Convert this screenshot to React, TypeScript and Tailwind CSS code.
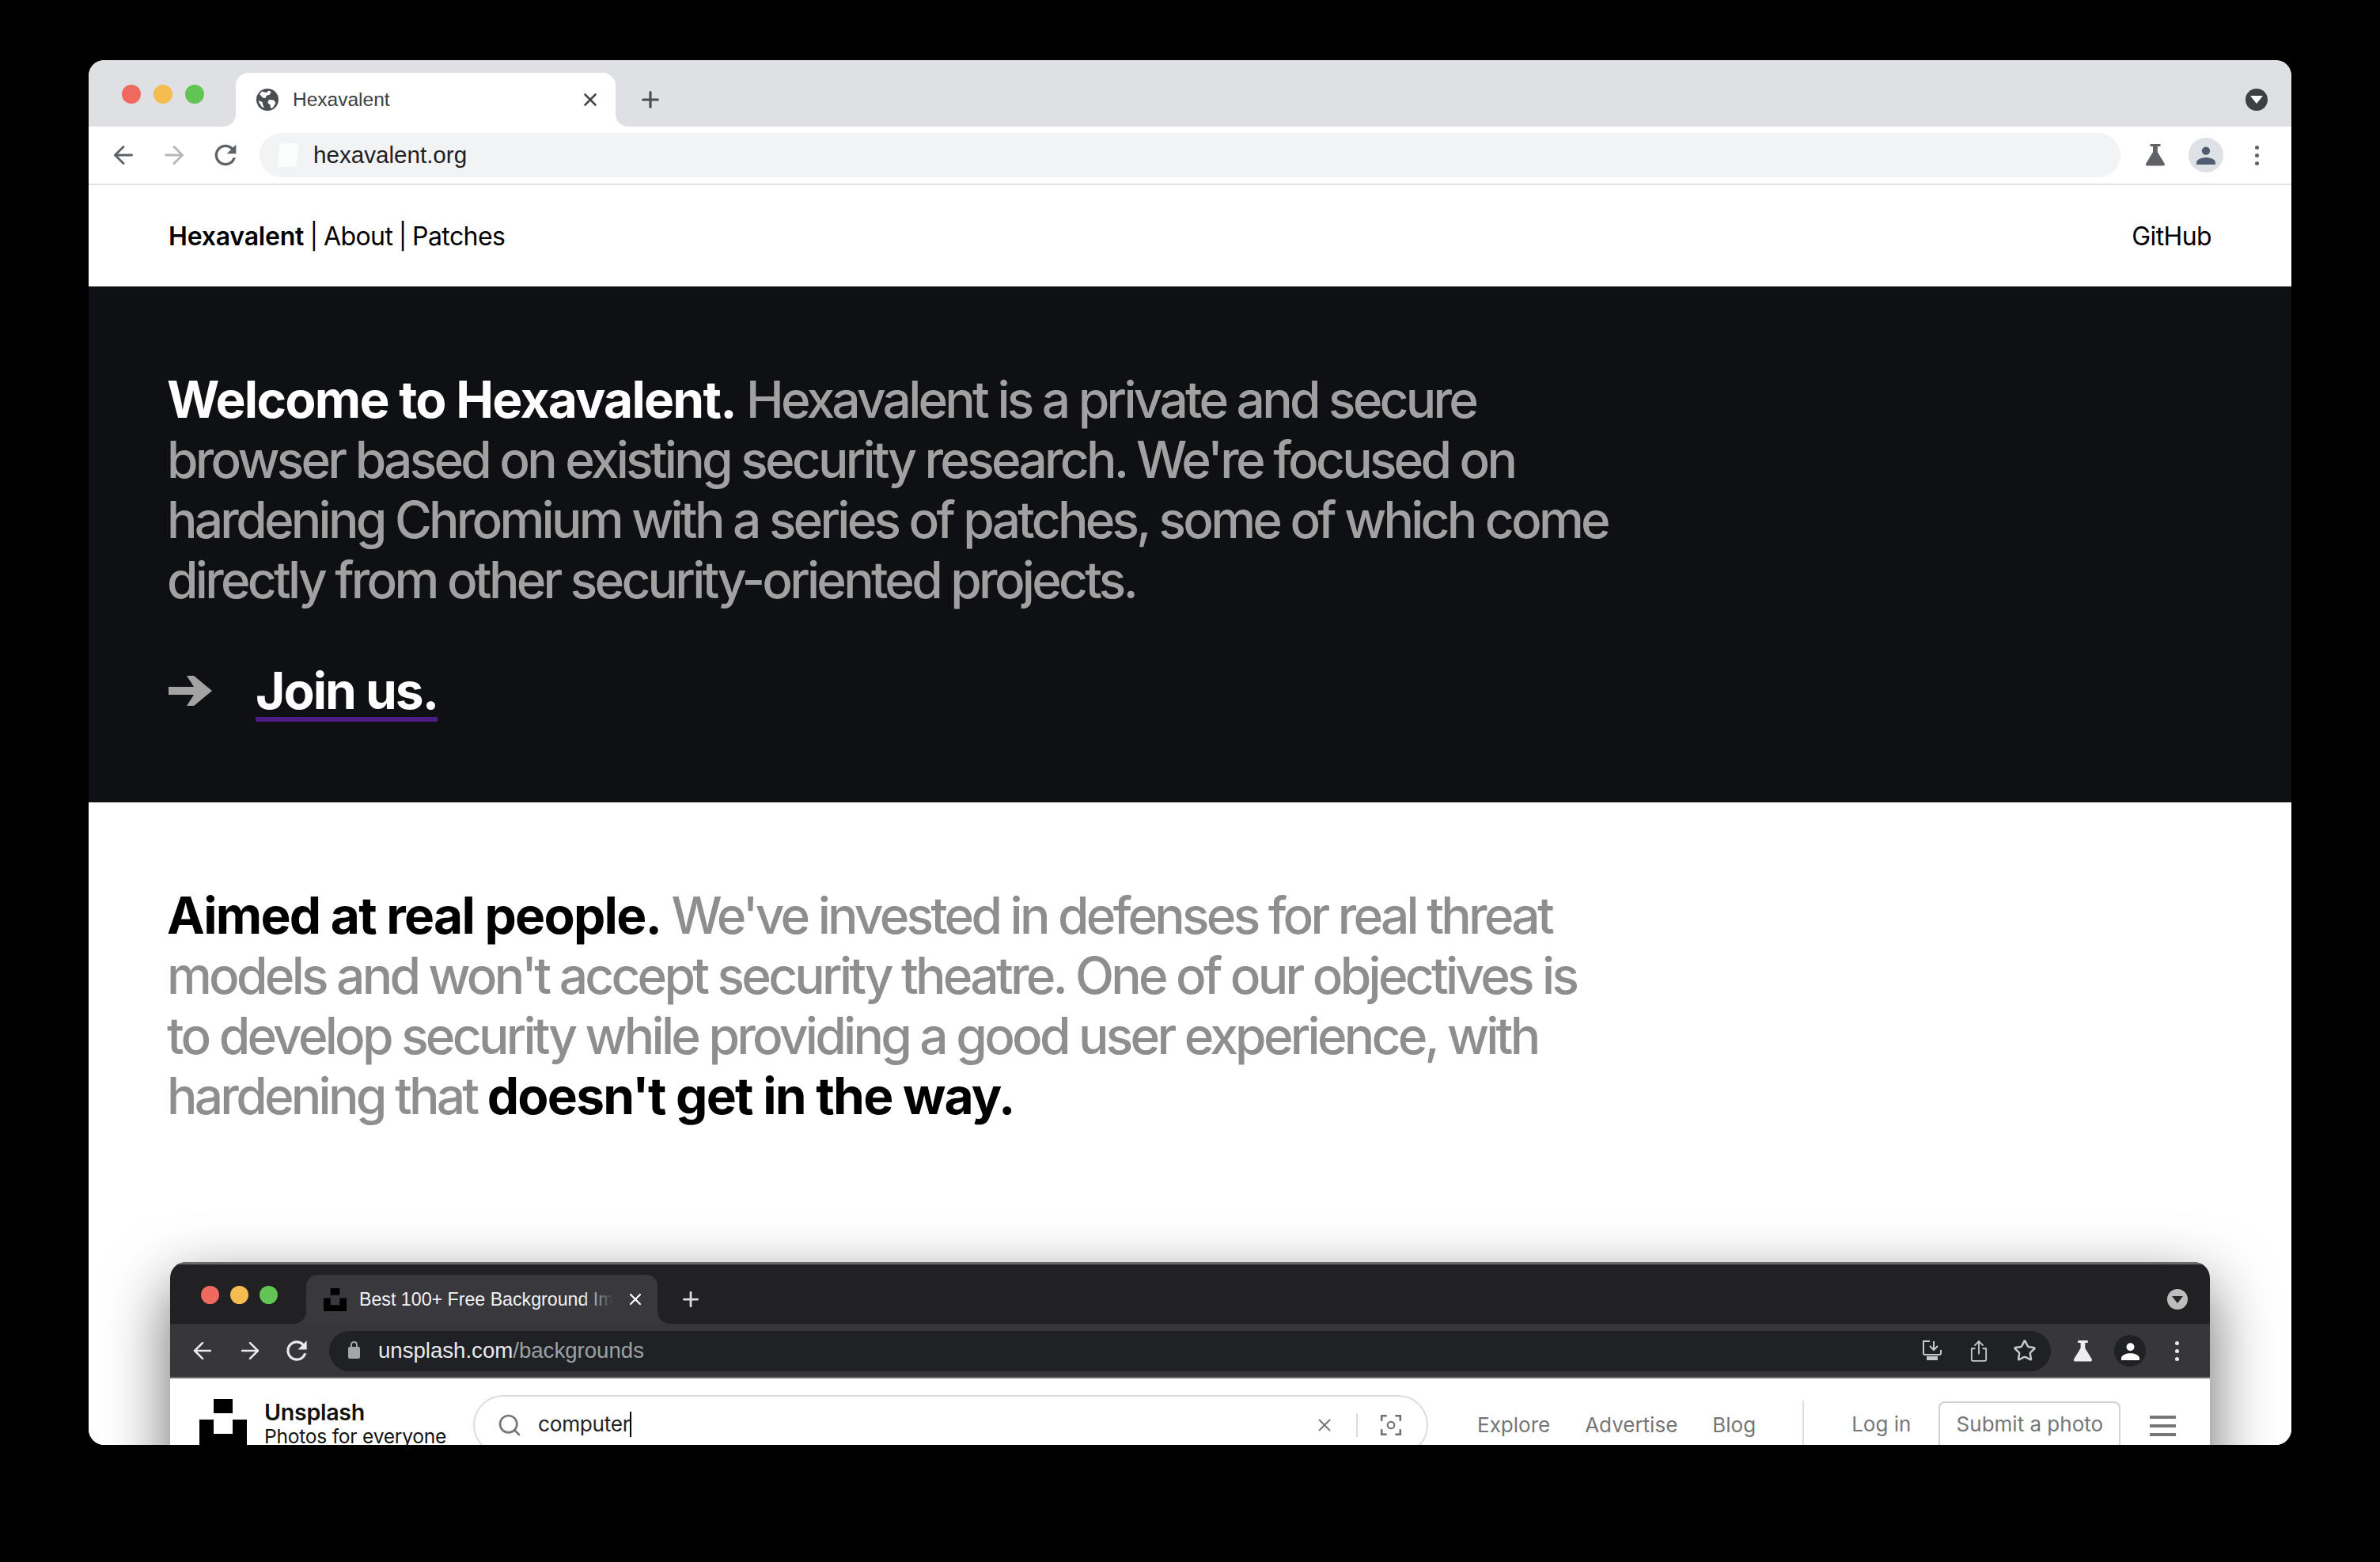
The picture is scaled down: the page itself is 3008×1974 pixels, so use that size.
import { ArrowLeft, ArrowRight, Plus, Search, Star, X } from "lucide-react";

const INTER = "font-['Inter',sans-serif]";
const HELV = "font-['Liberation_Sans',Arial,sans-serif]";

const Flask = ({ className }: { className: string }) => (
  <svg viewBox="0 0 28 28" className={className} fill="currentColor">
    <path d="M7.5 0h13v3h-3.6v7.2l8.7 14.2c.8 1.4.2 3.1-1.6 3.1H3.9c-1.8 0-2.4-1.7-1.6-3.1l8.7-14.2V3H7.5z" />
  </svg>
);

const Avatar = ({ className }: { className: string }) => (
  <svg viewBox="0 0 24 24" className={className} fill="currentColor">
    <circle cx="12" cy="6.6" r="5.2" />
    <path d="M0 21.5c0-4.6 7.4-6.6 12-6.6s12 2 12 6.6V24H0z" />
  </svg>
);

const Reload = ({ className }: { className: string }) => (
  <svg viewBox="0 0 24 24" className={className} fill="currentColor">
    <path d="M17.65 6.35A7.96 7.96 0 0 0 12 4c-4.42 0-7.99 3.58-7.99 8s3.57 8 7.99 8c3.73 0 6.84-2.55 7.73-6h-2.08A5.99 5.99 0 0 1 12 18c-3.31 0-6-2.69-6-6s2.69-6 6-6c1.66 0 3.14.69 4.22 1.78L13 11h7V4l-2.35 2.35z" />
  </svg>
);

const Dots = ({ className }: { className: string }) => (
  <div className={`flex flex-col items-center gap-[5px] ${className}`}>
    <span className="size-[5px] rounded-full bg-current" />
    <span className="size-[5px] rounded-full bg-current" />
    <span className="size-[5px] rounded-full bg-current" />
  </div>
);

const Globe = () => (
  <svg viewBox="0 0 28 28" className="size-[28px]">
    <circle cx="14" cy="14" r="14" fill="#4a4d52" />
    <path
      d="M7 3.5l5.5 1.6 3.2-2.6 3 1.6-2 3.6-4 1-1 3.4-3.6-.6-4-4.4zM16 14l6 .6 2.4 3.4-3 5.4-3.4 1.6-.6-4.6-3.2-2.6zM3 15l4.5 2 .8 3.6 1.6 4-3-1.6-3.4-5z"
      fill="#fff"
    />
  </svg>
);

const TabCorners = ({ fill }: { fill: string }) => (
  <>
    <svg viewBox="0 0 16 16" className="absolute bottom-0 -left-[16px] size-[16px]" fill={fill}>
      <path d="M16 0v16H0C9 16 16 9 16 0z" />
    </svg>
    <svg viewBox="0 0 16 16" className="absolute -right-[16px] bottom-0 size-[16px]" fill={fill}>
      <path d="M0 0v16h16C7 16 0 9 0 0z" />
    </svg>
  </>
);

const Lights = ({ size }: { size: string }) => (
  <>
    <span className={`${size} rounded-full bg-[#ee6a5f]`} />
    <span className={`${size} rounded-full bg-[#f5bd4f]`} />
    <span className={`${size} rounded-full bg-[#61c454]`} />
  </>
);

const UnsplashMark = ({ className }: { className: string }) => (
  <svg viewBox="0 0 60 60" className={className} fill="currentColor">
    <path d="M18 0h24v18H18zM0 26h18v18h24V26h18v34H0z" />
  </svg>
);

const OuterChrome = () => (
  <>
    <div className="flex h-[84px] bg-[#dfe0e4]">
      <div className="mt-[31px] ml-[42px] flex h-[24px] gap-[16px]">
        <Lights size="size-[24px]" />
      </div>
      <div className="relative mt-[16px] ml-[40px] flex h-[68px] w-[480px] items-center rounded-t-[16px] bg-white pr-[19px] pl-[26px]">
        <TabCorners fill="#ffffff" />
        <Globe />
        <span className={`${HELV} ml-[18px] text-[24.5px] text-[#3c4043]`}>Hexavalent</span>
        <X className="ml-auto size-[26px] text-[#45484c]" strokeWidth={2.4} />
      </div>
      <Plus className="mt-[34px] ml-[28px] size-[32px] text-[#4a4d52]" strokeWidth={2.4} />
      <div className="mt-[36px] mr-[30px] ml-auto flex size-[28px] items-center justify-center rounded-full bg-[#3c3f44]">
        <span className="border-x-[8px] border-t-[10px] border-x-transparent border-t-white" />
      </div>
    </div>
    <div className="flex h-[74px] items-center border-b-2 border-[#dfe1e5] bg-white">
      <ArrowLeft className="ml-[26px] size-[36px] text-[#5f6368]" strokeWidth={1.9} />
      <ArrowRight className="ml-[28px] size-[36px] text-[#b4b7bb]" strokeWidth={1.9} />
      <Reload className="ml-[27px] size-[40px] text-[#5f6368]" />
      <div className="ml-[23px] flex h-[56px] w-[2352px] items-center rounded-full bg-[#f1f3f4]">
        <span className="ml-[24px] h-[30px] w-[24px] -skew-x-6 rounded-[3px] bg-white/70" />
        <span className={`${HELV} ml-[20px] text-[29.6px] text-[#202124]`}>hexavalent.org</span>
      </div>
      <Flask className="ml-[30px] size-[28px] text-[#5f6368]" />
      <div className="ml-[28px] flex size-[44px] items-center justify-center rounded-full bg-[#dee1e6]">
        <Avatar className="size-[24px] text-[#515e72]" />
      </div>
      <Dots className="ml-[40px] text-[#5f6368]" />
    </div>
  </>
);

const InnerChrome = () => (
  <>
    <div className="flex h-[78px] border-t-[3px] border-[#6a6a6c] bg-[#212124]">
      <div className="mt-[27px] ml-[39px] flex h-[23px] gap-[14px]">
        <Lights size="size-[23px]" />
      </div>
      <div className="relative mt-[13px] ml-[36px] flex h-[62px] w-[444px] items-center rounded-t-[14px] bg-[#39393d] pl-[22px]">
        <TabCorners fill="#39393d" />
        <UnsplashMark className="size-[29px] text-black" />
        <span className={`${HELV} relative ml-[16px] w-[321px] overflow-hidden text-[23.2px] whitespace-nowrap text-[#f1f3f4]`}>
          Best 100+ Free Background Im
          <span className="absolute inset-y-0 right-0 w-[40px] bg-gradient-to-r from-transparent to-[#39393d]" />
        </span>
        <X className="ml-[16px] size-[24px] text-white" strokeWidth={2.2} />
      </div>
      <Plus className="mt-[29px] ml-[27px] size-[30px] text-[#dadce0]" strokeWidth={2.2} />
      <div className="mt-[31px] mr-[28px] ml-auto flex size-[26px] items-center justify-center rounded-full bg-[#bdbdbd]">
        <span className="border-x-[7px] border-t-[9px] border-x-transparent border-t-[#26262a]" />
      </div>
    </div>
    <div className="flex h-[69px] items-center border-b-2 border-[#6a6a6c] bg-[#37373b] pt-[1px]">
      <ArrowLeft className="ml-[24px] size-[34px] text-[#e8eaed]" strokeWidth={1.8} />
      <ArrowRight className="ml-[26px] size-[34px] text-[#e8eaed]" strokeWidth={1.8} />
      <Reload className="ml-[23px] size-[38px] text-[#e8eaed]" />
      <div className="ml-[22px] flex h-[51px] w-[2176px] items-center rounded-full bg-[#202124]">
        <span className="relative mt-[4px] ml-[24px] h-[15px] w-[15px] rounded-[2px] bg-[#a5a6a9]">
          <span className="absolute -top-[7px] left-[3px] h-[9px] w-[9px] rounded-t-full border-2 border-b-0 border-[#a5a6a9]" />
        </span>
        <span className={`${HELV} ml-[23px] text-[27.6px] text-[#e8eaed]`}>
          unsplash.com<span className="text-[#9aa0a6]">/backgrounds</span>
        </span>
        <svg viewBox="0 0 28 28" className="ml-auto size-[28px] text-[#c8c9cb]" fill="none" stroke="currentColor" strokeWidth="2">
          <path d="M11 2H3v15c0 1 .5 2 2 2h18c1 0 2-1 2-2v-4" />
          <path d="M16 2v10M11 8l5 5 5-5" />
          <path d="M8 22h12v3H8z" fill="currentColor" />
        </svg>
        <svg viewBox="0 0 24 30" className="ml-[34px] h-[28px] w-[22px] text-[#c8c9cb]" fill="none" stroke="currentColor" strokeWidth="2">
          <path d="M12 20V2M6 8l6-6 6 6" />
          <path d="M7 12H2v15c0 1 .5 2 2 2h16c1 0 2-1 2-2V12h-5" />
        </svg>
        <Star className="ml-[32px] size-[30px] text-[#c8c9cb]" strokeWidth={2} />
        <span className="w-[18px]" />
      </div>
      <Flask className="ml-[27px] size-[27px] text-[#eeeef2]" />
      <div className="ml-[26px] flex size-[40px] items-center justify-center rounded-full bg-[#202124]">
        <Avatar className="size-[23px] text-white" />
      </div>
      <Dots className="ml-[37px] text-[#e8eaed]" />
    </div>
  </>
);

const UnsplashPage = () => (
  <div className={`${INTER} flex bg-white pt-[21px] pl-[37px]`}>
    <UnsplashMark className="mt-[5px] size-[60px] shrink-0 text-black" />
    <div className="mt-[5px] ml-[22px] w-[264px] shrink-0">
      <div className="text-[28.6px] leading-[33px] font-semibold tracking-[-0.01em] text-[#111]">Unsplash</div>
      <div className="text-[24.6px] leading-[28px] tracking-[-0.01em] text-[#111]">Photos for everyone</div>
    </div>
    <div className="flex h-[76px] w-[1207px] shrink-0 items-center rounded-full border-2 border-[#dcdcdc] pr-[30px] pl-[28px]">
      <Search className="size-[32px] text-[#767676]" strokeWidth={2} />
      <span className="mb-[2px] ml-[20px] border-r-2 border-black text-[26.2px] leading-[32px] tracking-[-0.01em] text-[#222]">computer</span>
      <X className="ml-auto size-[26px] text-[#767676]" strokeWidth={1.8} />
      <span className="mx-[27px] h-[30px] w-[2px] bg-[#dcdcdc]" />
      <svg viewBox="0 0 28 28" className="size-[30px] text-[#6f6f6f]" fill="none" stroke="currentColor" strokeWidth="2.4">
        <path d="M9 3H3v6M19 3h6v6M9 25H3v-6M19 25h6v-6" />
        <circle cx="14" cy="14" r="4" strokeWidth="2" />
      </svg>
    </div>
    <div className="mt-[17px] ml-[62px] flex h-[40px] items-center gap-[44px] text-[26px] text-[#767676]">
      <span>Explore</span>
      <span>Advertise</span>
      <span>Blog</span>
    </div>
    <span className="mt-[7px] ml-[59px] h-[70px] w-[2px] bg-[#dcdcdc]" />
    <span className="mt-[17px] ml-[60px] text-[26px] leading-[40px] text-[#767676]">Log in</span>
    <div className="mt-[8px] ml-[35px] flex h-[70px] w-[230px] justify-center rounded-[8px] border-2 border-[#d1d1d1] pt-[7px] text-[26px] leading-[40px] text-[#767676]">
      Submit a photo
    </div>
    <div className="mt-[26px] ml-[37px] flex w-[33px] flex-col gap-[7px]">
      <span className="h-[4px] bg-[#767676]" />
      <span className="h-[4px] bg-[#767676]" />
      <span className="h-[4px] bg-[#767676]" />
    </div>
  </div>
);

export default function App() {
  return (
    <div className="h-[1974px] w-[3008px] bg-black pt-[76px] pl-[112px]">
      <div className={`${INTER} flex h-[1750px] w-[2784px] flex-col overflow-hidden rounded-[20px] bg-white`}>
        <OuterChrome />

        <nav className="flex h-[128px] shrink-0 items-center justify-between px-[101px] pt-[2px] text-[32px] tracking-[-0.6px] text-black">
          <div className="[word-spacing:-1px]">
            <span className="font-semibold tracking-[-0.2px]">Hexavalent</span> | About | Patches
          </div>
          <span>GitHub</span>
        </nav>

        <section className="h-[652px] shrink-0 bg-[#0f1013] px-[99px] pt-[105px]">
          <p className="w-[1840px] text-[64px] leading-[76px] font-[450] tracking-[-3.75px] text-[#a1a1a1]">
            <strong className="font-bold tracking-[-1.75px] text-white">Welcome to Hexavalent.</strong> Hexavalent is a
            private and secure browser based on existing security research. We're focused on hardening Chromium with a
            series of patches, some of which come directly from other security-oriented projects.
          </p>
          <div className="mt-[64px] flex h-[77px] items-start">
            <svg viewBox="0 0 55 38" className="mt-[19px] ml-[2px] h-[38px] w-[55px] text-[#a3a3a3]" fill="currentColor">
              <path d="M0 14h32L23 0h9l23 19-23 19h-9l9-14H0z" />
            </svg>
            <a className="ml-[55px] h-[77px] border-b-[6px] border-[#4c1d84] text-[64px] leading-[76px] font-bold tracking-[-2px] text-white">
              Join us.
            </a>
          </div>
        </section>

        <section className="flex-1 overflow-hidden bg-white pt-[105px]">
          <p className="ml-[99px] w-[1840px] text-[64px] leading-[76px] font-[450] tracking-[-3.75px] text-[#8e8e8e]">
            <strong className="font-bold tracking-[-1.75px] text-black">Aimed at real people.</strong> We've invested in
            defenses for real threat models and won't accept security theatre. One of our objectives is to develop
            security while providing a good user experience, with hardening that{" "}
            <strong className="font-bold tracking-[-1.75px] text-black">doesn't get in the way.</strong>
          </p>
          <div className="mx-[103px] mt-[172px] h-[400px] overflow-hidden rounded-t-[20px] shadow-[0_30px_80px_rgba(0,0,0,0.6)]">
            <InnerChrome />
            <UnsplashPage />
          </div>
        </section>
      </div>
    </div>
  );
}
